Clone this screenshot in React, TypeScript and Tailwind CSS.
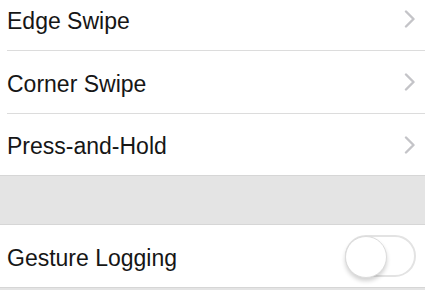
import React from 'react';

const FONT = { fontFamily: '"Liberation Sans", Arial, sans-serif' };

function Chevron() {
  return (
    <svg width="12" height="18" viewBox="0 0 12 18" className="shrink-0">
      <polyline points="2,1.5 9.5,9 2,16.5" fill="none" stroke="#c4c4c8" strokeWidth="2.4" strokeLinecap="round" strokeLinejoin="round" />
    </svg>
  );
}

function NavRow({ label, h = 'h-[62px]' }: { label: string; h?: string }) {
  return (
    <div className={`flex items-center justify-between pl-[7px] pr-[9px] ${h}`}>
      <span className="pt-[4px] text-[23px] leading-none text-[#161616]">{label}</span>
      <Chevron />
    </div>
  );
}

function Toggle() {
  return (
    <div className="relative h-[42px] w-[71px] rounded-full border-2 border-[#e3e3e3] bg-white">
      <div className="absolute left-[-2px] top-[-1px] h-[42px] w-[42px] rounded-full border border-[#dcdcdc] bg-white shadow-[0_3px_4px_rgba(0,0,0,0.18)]" />
    </div>
  );
}

export default function App() {
  return (
    <div className="h-[290px] w-[425px] overflow-hidden bg-[#e4e4e4]" style={FONT}>
      <div className="mt-[-12px] bg-white">
        <NavRow label="Edge Swipe" />
        <div className="ml-[7px] h-px bg-[#dcdcdc]" />
        <NavRow label="Corner Swipe" />
        <div className="ml-[7px] h-px bg-[#dcdcdc]" />
        <NavRow label="Press-and-Hold" h="h-[61px]" />
      </div>
      <div className="h-[50px] border-y border-[#d6d6d6] bg-[#e4e4e4]" />
      <div className="flex h-[62px] items-center justify-between bg-white pl-[7px] pr-[9px]">
        <span className="pt-[4px] text-[23px] leading-none text-[#161616]">Gesture Logging</span>
        <Toggle />
      </div>
      <div className="h-px bg-[#d6d6d6]" />
    </div>
  );
}
